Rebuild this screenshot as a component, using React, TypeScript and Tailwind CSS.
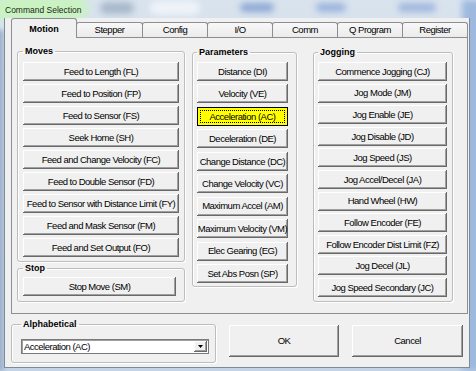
import React from 'react';

const ui = "font-['Liberation_Sans',Arial,sans-serif] text-[9.5px] tracking-[-0.5px]";

const bevel =
  'bg-[#f0f0f0] shadow-[inset_-1px_-1px_0_#696969,inset_1px_1px_0_#ffffff,inset_-2px_-2px_0_#a0a0a0]';

const moves = [
  'Feed to Length (FL)',
  'Feed to Position (FP)',
  'Feed to Sensor (FS)',
  'Seek Home (SH)',
  'Feed and Change Velocity (FC)',
  'Feed to Double Sensor (FD)',
  'Feed to Sensor with Distance Limit (FY)',
  'Feed and Mask Sensor (FM)',
  'Feed and Set Output (FO)',
];

const params = [
  'Distance (DI)',
  'Velocity (VE)',
  'Acceleration (AC)',
  'Deceleration (DE)',
  'Change Distance (DC)',
  'Change Velocity (VC)',
  'Maximum Accel (AM)',
  'Maximum Velocity (VM)',
  'Elec Gearing (EG)',
  'Set Abs Posn (SP)',
];

const jogging = [
  'Commence Jogging (CJ)',
  'Jog Mode (JM)',
  'Jog Enable (JE)',
  'Jog Disable (JD)',
  'Jog Speed (JS)',
  'Jog Accel/Decel (JA)',
  'Hand Wheel (HW)',
  'Follow Encoder (FE)',
  'Follow Encoder Dist Limit (FZ)',
  'Jog Decel (JL)',
  'Jog Speed Secondary (JC)',
];

const tabs = ['Stepper', 'Config', 'I/O', 'Comm', 'Q Program', 'Register'];

function Btn({ label, active }: { label: string; active?: boolean }) {
  if (active) {
    return (
      <div className="flex h-[19px] border border-black bg-[#ffff00] p-[2px]">
        <div className="flex flex-1 items-center justify-center border border-dotted border-black leading-none whitespace-nowrap">
          {label}
        </div>
      </div>
    );
  }
  return (
    <div className={`flex h-[19px] items-center justify-center leading-none whitespace-nowrap ${bevel}`}>
      {label}
    </div>
  );
}

function Group({
  label,
  className,
  children,
}: {
  label: string;
  className: string;
  children: React.ReactNode;
}) {
  return (
    <fieldset
      className={`rounded-[3px] border border-[#bdbdbd] shadow-[1px_1px_0_#ffffff,inset_1px_1px_0_#ffffff] ${className}`}
    >
      <legend className="px-[2px] text-[9px] leading-[12px] font-bold tracking-normal">{label}</legend>
      {children}
    </fieldset>
  );
}

export default function App() {
  return (
    <div className={`relative flex h-[371px] w-[476px] flex-col overflow-hidden bg-[linear-gradient(180deg,#d9e3ee,#c4d4e6)] text-black ${ui}`}>
      {/* blurred glass behind the title bar */}
      <div className="absolute top-[2px] left-[100px] h-[12px] w-[34px] rounded-full bg-[#a9b9cc] blur-[3px]" />
      <div className="absolute top-[1px] left-[150px] h-[14px] w-[50px] rounded-full bg-[#eef3f8] blur-[3px]" />
      <div className="absolute top-[3px] left-[240px] h-[9px] w-[34px] rounded-full bg-[#8ea9d6] blur-[3px]" />
      <div className="absolute top-[3px] left-[316px] h-[9px] w-[30px] rounded-full bg-[#9cb4dc] blur-[3px]" />
      <div className="absolute top-[3px] left-[398px] h-[9px] w-[38px] rounded-full bg-[#a0b7dd] blur-[3px]" />
      <div className="absolute top-[0px] left-[462px] h-[371px] w-[20px] bg-[#9db9de] blur-[3px]" />
      <div className="absolute top-[30px] left-[-6px] h-[341px] w-[10px] bg-[#9fb3cc] blur-[2px]" />

      {/* title */}
      <div className="relative h-[18px] shrink-0">
        <div className="absolute top-[-3px] left-[-6px] h-[24px] w-[94px] rounded-full bg-[#c9f3bf] blur-[4px]" />
        <div className="relative pt-[5px] pl-[5px] text-[8.5px] leading-[10px] tracking-normal text-[#1e1e1e]">
          Command Selection
        </div>
      </div>

      {/* client area */}
      <div className="relative ml-[4px] mr-[6px] mb-[3px] flex flex-1 flex-col border-x border-b border-[#7d8a99] bg-[#f0f0f0] pl-[6px]">
        {/* tabs */}
        <div className="flex h-[19px] items-end">
          <div className="relative z-10 -mb-px flex h-[20px] w-[66px] justify-center rounded-t-[3px] border-x border-t border-[#8c8e94] bg-[#f0f0f0] pt-[4px] text-[9px] leading-[12px] font-bold tracking-normal">
            Motion
          </div>
          {tabs.map((t, i) => (
            <div
              key={t}
              className={`-ml-px flex h-[15px] items-center justify-center rounded-t-[3px] border-x border-t border-[#8c8e94] bg-[linear-gradient(180deg,#f8f8f8,#ebebeb)] leading-none ${
                i === 0 ? 'w-[67px]' : 'w-[66px]'
              }`}
            >
              {t}
            </div>
          ))}
        </div>

        {/* panel */}
        <div className="flex h-[277px] w-[457px] items-start border border-[#8c8e94] bg-[#f0f0f0] pt-[7px] pl-[5px]">
          <div className="flex flex-col">
            <Group label="Moves" className="w-[168px] px-[5px] pt-[5px] pb-[4px]">
              <div className="flex h-[195px] flex-col justify-between">
                {moves.map((m) => (
                  <Btn key={m} label={m} />
                ))}
              </div>
            </Group>
            <Group label="Stop" className="w-[168px] px-[5px] pt-[3px] pb-[5px]">
              <div className="w-[153px]">
                <Btn label="Stop Move (SM)" />
              </div>
            </Group>
          </div>

          <Group label="Parameters" className="mt-[1px] ml-[7px] w-[105px] pl-[4px] pt-[4px] pb-[3px]">
            <div className="flex h-[221px] w-[91px] flex-col justify-between">
              {params.map((p) => (
                <Btn key={p} label={p} active={p === 'Acceleration (AC)'} />
              ))}
            </div>
          </Group>

          <Group label="Jogging" className="mt-[1px] ml-[16px] w-[140px] pl-[4px] pt-[4px] pb-[4px]">
            <div className="flex h-[235px] w-[129px] flex-col justify-between">
              {jogging.map((j) => (
                <Btn key={j} label={j} />
              ))}
            </div>
          </Group>
        </div>

        {/* bottom row */}
        <div className="mt-[4px] flex items-start">
          <Group label="Alphabetical" className="w-[205px] pl-[9px] pt-[9px] pb-[8px]">
            <div className="flex h-[15px] w-[188px] items-stretch border border-[#7a7a7a] bg-white p-[1px] shadow-[inset_1px_1px_0_#a0a0a0]">
              <div className="flex flex-1 items-center pl-[1px] leading-none">Acceleration (AC)</div>
              <div className={`flex w-[13px] items-center justify-center ${bevel}`}>
                <svg width="5" height="3" viewBox="0 0 5 3">
                  <path d="M0 0h5l-2.5 3z" fill="#000" />
                </svg>
              </div>
            </div>
          </Group>
          <div className={`mt-[7px] ml-[13px] flex h-[32px] w-[110px] items-center justify-center ${bevel}`}>OK</div>
          <div className={`mt-[7px] ml-[13px] flex h-[32px] w-[111px] items-center justify-center ${bevel}`}>Cancel</div>
        </div>
      </div>
    </div>
  );
}
